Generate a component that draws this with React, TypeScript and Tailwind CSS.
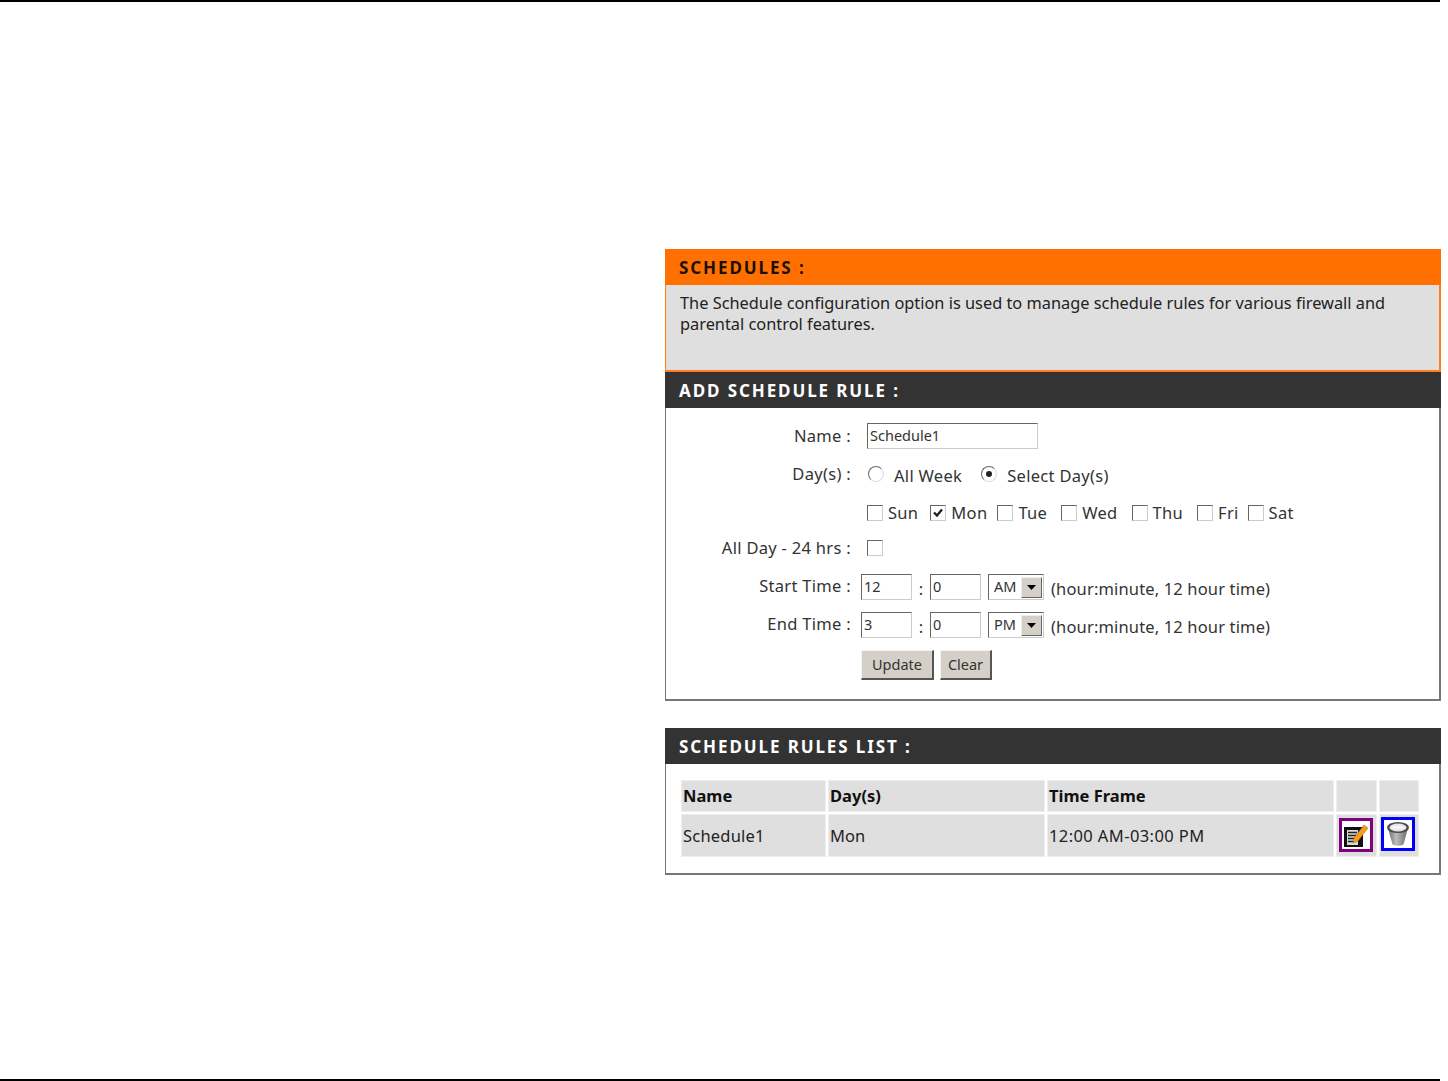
const font = "[font-family:'Noto_Sans',sans-serif]";

function SectionHeader({ title, tone }: { title: string; tone: "orange" | "dark" }) {
  return (
    <div
      className={`h-9 flex items-center pl-3.5 pt-[2px] text-[17px] font-bold tracking-[1.9px] ${
        tone === "orange" ? "bg-[#ff7000] text-[#1a1000]" : "bg-[#333333] text-white"
      }`}
    >
      {title}
    </div>
  );
}

function Check({ on, label }: { on?: boolean; label?: string }) {
  return (
    <span className="flex items-center">
      <span className="w-4 h-4 flex items-center justify-center bg-white border border-t-[#666] border-l-[#666] border-r-[#ccc] border-b-[#ccc]">
        {on && (
          <svg width="12" height="12" viewBox="0 0 12 12">
            <path d="M2 5.5 L5 8.5 L10 2.5" fill="none" stroke="#222" strokeWidth="2.4" />
          </svg>
        )}
      </span>
      {label && <span className="ml-[5px] tracking-[0.3px]">{label}</span>}
    </span>
  );
}

function Radio({ on, label }: { on?: boolean; label: string }) {
  return (
    <span className="flex items-center">
      <span className="w-4 h-4 -mt-1 rounded-full bg-white border border-t-[#666] border-l-[#666] border-r-[#ddd] border-b-[#ddd] flex items-center justify-center">
        {on && <span className="w-1.5 h-1.5 rounded-full bg-[#222]" />}
      </span>
      <span className="ml-[10px] tracking-[0.3px]">{label}</span>
    </span>
  );
}

function TextBox({ value, width }: { value: string; width: string }) {
  return (
    <span
      className={`${width} h-[26px] flex items-center pl-[2px] text-[14.5px] bg-white border border-t-[#666] border-l-[#666] border-r-[#ccc] border-b-[#ccc]`}
    >
      {value}
    </span>
  );
}

function Meridiem({ value }: { value: string }) {
  return (
    <span className="w-[56px] h-[26px] flex items-center justify-between pl-[5px] pr-[1px] text-[14.5px] bg-white border border-t-[#666] border-l-[#666] border-r-[#ccc] border-b-[#ccc]">
      {value}
      <span className="w-[21px] h-[21px] flex items-center justify-center bg-[#d4d0c8] border border-t-[#eee] border-l-[#eee] border-r-[#666] border-b-[#666]">
        <svg width="9" height="5" viewBox="0 0 9 5">
          <path d="M0 0 H9 L4.5 5 Z" fill="#000" />
        </svg>
      </span>
    </span>
  );
}

function Label({ children, lift = "" }: { children: string; lift?: string }) {
  return (
    <span className={`w-[185px] shrink-0 text-right whitespace-pre tracking-[0.3px] ${lift}`}>
      {children}
    </span>
  );
}

function TimeRow({ label, hour, ampm }: { label: string; hour: string; ampm: string }) {
  return (
    <div className="flex items-center h-[26px]">
      <Label lift="-mt-[2px]">{label}</Label>
      <span className="ml-[10px]">
        <TextBox value={hour} width="w-[51px]" />
      </span>
      <span className="w-[18px] text-center mt-[4px]">:</span>
      <TextBox value="0" width="w-[51px]" />
      <span className="ml-[7px]">
        <Meridiem value={ampm} />
      </span>
      <span className="ml-[7px] mt-[4px] tracking-[0.15px]">(hour:minute, 12 hour time)</span>
    </div>
  );
}

function PushButton({ children, width }: { children: string; width: string }) {
  return (
    <span
      className={`${width} h-[30px] flex items-center justify-center bg-[#d4d0c8] border-t border-l border-t-[#f4f4f4] border-l-[#f4f4f4] border-r-2 border-b-2 border-r-[#555] border-b-[#555]`}
    >
      {children}
    </span>
  );
}

function EditIcon() {
  return (
    <svg width="34" height="34" viewBox="0 0 34 34">
      <rect x="1.5" y="1.5" width="31" height="31" fill="#fff" stroke="#800080" strokeWidth="3" />
      <rect x="5" y="9" width="19" height="20" fill="#111" />
      <rect x="8" y="12" width="11" height="15" fill="#d8d8d8" />
      <path d="M9 14.5 H18 M9 17.5 H18 M9 20.5 H18 M9 23.5 H15" stroke="#222" strokeWidth="1.4" />
      <path d="M15 20 L25 7 L29 10 L19 23 L14 25 Z" fill="#f59a1c" stroke="#b06a10" strokeWidth="0.5" />
    </svg>
  );
}

function TrashIcon() {
  return (
    <svg width="34" height="34" viewBox="0 0 34 34">
      <defs>
        <linearGradient id="bin" x1="0" x2="1" y1="0" y2="0">
          <stop offset="0" stopColor="#666" />
          <stop offset="0.4" stopColor="#bdbdbd" />
          <stop offset="1" stopColor="#6a6a6a" />
        </linearGradient>
      </defs>
      <rect x="1.5" y="1.5" width="31" height="31" fill="#fff" stroke="#0000ff" strokeWidth="3" />
      <path d="M7 11 L11.5 27.5 Q17 30 22.5 27.5 L27 11 Z" fill="url(#bin)" />
      <ellipse cx="17" cy="10.5" rx="11" ry="5.5" fill="#4a4a4a" />
      <ellipse cx="17" cy="10.5" rx="8.5" ry="4" fill="#e6e6e6" />
      <path d="M10 11 Q13 7.5 16 9.5 Q19 7 24 11 Q17 13 10 11 Z" fill="#f6f6f6" />
    </svg>
  );
}

const cell = "bg-[#dfdfdf] pl-px align-middle border border-[#eeeeee]";
const iconCell = "bg-[#dfdfdf] align-top border border-[#eeeeee]";

const days = [
  { label: "Sun", gap: "" },
  { label: "Mon", on: true, gap: "ml-[12px]" },
  { label: "Tue", gap: "ml-[10px]" },
  { label: "Wed", gap: "ml-[14px]" },
  { label: "Thu", gap: "ml-[14px]" },
  { label: "Fri", gap: "ml-[14px]" },
  { label: "Sat", gap: "ml-[9px]" },
];

export default function App() {
  return (
    <div className={`w-[1448px] h-[1081px] flex flex-col bg-white text-[#333] text-[16.5px] ${font}`}>
      <div className="h-[2px] w-[1440px] bg-black" />
      <main className="flex-1 pl-[665px] pt-[247px]">
        <div className="w-[776px] flex flex-col">
          <section className="border-l border-r-2 border-b-2 border-[#ff7f20]">
            <div className="-ml-px -mr-[2px]">
              <SectionHeader title="SCHEDULES :" tone="orange" />
            </div>
            <p className="h-[85px] bg-[#dfdfdf] pl-[14px] pr-[40px] pt-[8px] leading-[21px] text-[16.35px] text-[#222]">
              The Schedule configuration option is used to manage schedule rules for various firewall and parental
              control features.
            </p>
          </section>

          <section className="border-l border-r-2 border-b-2 border-[#777] h-[329px]">
            <div className="-ml-px -mr-[2px]">
              <SectionHeader title="ADD SCHEDULE RULE :" tone="dark" />
            </div>
            <div className="flex flex-col pt-[15px]">
              <div className="flex items-center h-[26px]">
                <Label>{"Name :"}</Label>
                <span className="ml-[16px]">
                  <TextBox value="Schedule1" width="w-[171px]" />
                </span>
              </div>
              <div className="flex items-center h-[26px] mt-[14px]">
                <Label lift="-mt-[4px]">{"Day(s) :"}</Label>
                <span className="ml-[17px] flex items-center gap-[19px]">
                  <Radio label="All Week" />
                  <Radio on label="Select Day(s)" />
                </span>
              </div>
              <div className="flex items-center h-[26px] mt-[11px] pl-[201px]">
                {days.map((d) => (
                  <span key={d.label} className={d.gap}>
                    <Check on={d.on} label={d.label} />
                  </span>
                ))}
              </div>
              <div className="flex items-center h-[26px] mt-[9px]">
                <Label>{"All Day - 24 hrs :"}</Label>
                <span className="ml-[16px]"><Check /></span>
              </div>
              <div className="mt-[13px]">
                <TimeRow label="Start Time :" hour="12" ampm="AM" />
              </div>
              <div className="mt-[12px]">
                <TimeRow label="End Time :" hour="3" ampm="PM" />
              </div>
              <div className="flex gap-[6px] mt-[12px] pl-[195px] text-[14.5px]">
                <PushButton width="w-[73px]">Update</PushButton>
                <PushButton width="w-[52px]">Clear</PushButton>
              </div>
            </div>
          </section>

          <section className="border-l border-r-2 border-b-2 border-[#777] mt-[27px] h-[147px]">
            <div className="-ml-px -mr-[2px]">
              <SectionHeader title="SCHEDULE RULES LIST :" tone="dark" />
            </div>
            <div className="pl-[13px] pt-[14px]">
              <table className="border-separate border-spacing-[2px] w-[742px] table-fixed text-[#222]">
                <colgroup>
                  <col className="w-[145px]" />
                  <col className="w-[217px]" />
                  <col className="w-[287px]" />
                  <col className="w-[41px]" />
                  <col className="w-[40px]" />
                </colgroup>
                <tbody>
                  <tr className="h-[32px] font-bold text-[#111]">
                    <td className={cell}>Name</td>
                    <td className={cell}>Day(s)</td>
                    <td className={cell}>Time Frame</td>
                    <td className={cell} />
                    <td className={cell} />
                  </tr>
                  <tr className="h-[43px]">
                    <td className={cell}><span className="relative top-px tracking-[0.2px]">Schedule1</span></td>
                    <td className={cell}><span className="relative top-px">Mon</span></td>
                    <td className={cell}><span className="relative top-px tracking-[0.4px]">12:00 AM-03:00 PM</span></td>
                    <td className={`${iconCell} pl-[2px] pt-[3px]`}><EditIcon /></td>
                    <td className={`${iconCell} pl-px pt-[2px]`}><TrashIcon /></td>
                  </tr>
                </tbody>
              </table>
            </div>
          </section>
        </div>
      </main>
      <div className="h-[2px] w-[1440px] bg-black" />
    </div>
  );
}
